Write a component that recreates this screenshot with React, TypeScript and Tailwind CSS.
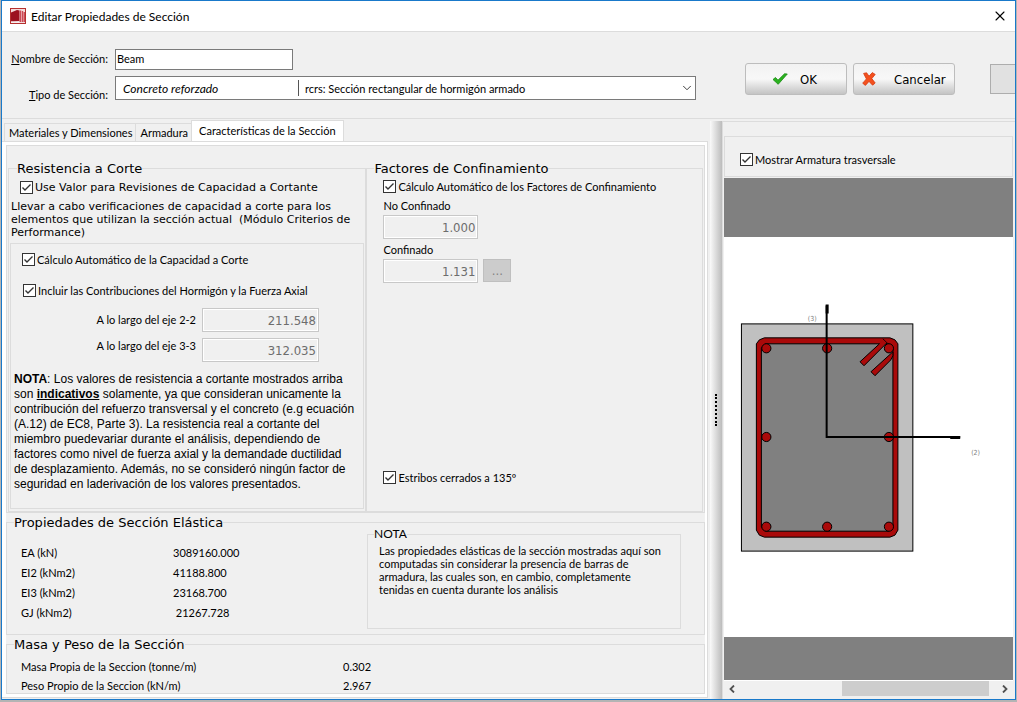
import { useState } from "react";
import type { ReactNode } from "react";
import { ChevronDown, X } from "lucide-react";

interface CheckFieldProps {
  children: ReactNode;
  className?: string;
}

function CheckField({ children, className = "" }: CheckFieldProps) {
  const [checked, setChecked] = useState(true);

  return (
    <label className={`flex items-center gap-0.5 whitespace-nowrap ${className}`}>
      <span className="grid h-[13px] w-[13px] shrink-0">
        <input
          type="checkbox"
          checked={checked}
          onChange={(e) => setChecked(e.target.checked)}
          className="col-start-1 row-start-1 h-[13px] w-[13px] appearance-none border border-[#333333] bg-white"
        />
        {checked && (
          <svg viewBox="0 0 13 13" className="pointer-events-none col-start-1 row-start-1 h-[13px] w-[13px]">
            <path d="M2.5 6.5 L5 9 L10.5 3.5" fill="none" stroke="#333" strokeWidth="1.4" />
          </svg>
        )}
      </span>
      <span>{children}</span>
    </label>
  );
}

interface GroupProps {
  title: string;
  children: ReactNode;
  className?: string;
  small?: boolean;
}

function Group({ title, children, className = "", small = false }: GroupProps) {
  return (
    <fieldset className={`min-w-0 border border-[#dcdcdc] ${className}`}>
      <legend
        className={
          small
            ? "ml-1.5 h-4 text-[12px] leading-4"
            : "ml-[7px] h-4 font-['Verdana','DejaVu_Sans',sans-serif] text-[13px] leading-[17px]"
        }
      >
        {title}
      </legend>
      {children}
    </fieldset>
  );
}

interface ValueBoxProps {
  id: string;
  value: string;
  className: string;
}

function ValueBox({ id, value, className }: ValueBoxProps) {
  return (
    <input
      id={id}
      type="text"
      disabled
      defaultValue={value}
      className={`h-6 border border-[#c8c8c8] bg-[#f0f0f0] px-0.5 text-right font-['Tahoma','DejaVu_Sans_Condensed',sans-serif] text-[13px] text-[#6d6d6d] shadow-[inset_0_0_0_1px_#ffffff] ${className}`}
    />
  );
}

const tabs = ["Materiales y Dimensiones", "Armadura", "Características de la Sección"];

const elasticProps = [
  ["EA (kN)", "3089160.000"],
  ["EI2 (kNm2)", "41188.800"],
  ["EI3 (kNm2)", "23168.700"],
  ["GJ (kNm2)", "\u00a021267.728"],
];

const massProps = [
  ["Masa Propia de la Seccion (tonne/m)", "0.302"],
  ["Peso Propio de la Seccion (kN/m)", "2.967"],
];

// Rebar centres in drawing units
const bars = [
  [42, 111], [103, 111], [165, 111],
  [42, 200], [165, 200],
  [42, 290], [103, 290], [165, 290],
];

function AppIcon() {
  return (
    <svg viewBox="0 0 16 16" className="h-4 w-4">
      <rect x="0.5" y="0.5" width="15" height="15" fill="#f3dcdc" stroke="#b5302f" />
      <path d="M1 4.5 L7 2 L9.5 2.4 V14 L1 13.5 Z" fill="#9c1220" />
      <path d="M1 13.6 L9.5 13 V15 H1 Z" fill="#f7eeee" />
      <path d="M10.5 2.4 V14 M12.5 3 V14 M14.3 4 V14" stroke="#cc4a56" strokeWidth="1.4" />
    </svg>
  );
}

function TickIcon() {
  return (
    <svg viewBox="0 0 16 12" className="h-3 w-4">
      <path d="M1 6.5 L3.5 4.5 L6 7.2 L12.5 0.8 L15.3 1 L6.2 11.3 Z" fill="#2bb21f" stroke="#168a12" strokeWidth="0.8" />
    </svg>
  );
}

function CrossIcon() {
  return (
    <svg viewBox="0 0 14 14" className="h-3.5 w-3.5">
      <path
        d="M1.6 1.4 L4.6 0.8 L7 4.2 L10.3 0.6 L13.2 2.4 L9.8 6.6 L13.2 11 L10.6 13.2 L7 9.4 L3.4 13.4 L0.7 11.2 L4.4 6.9 Z"
        fill="#f4511e"
        stroke="#d43a12"
        strokeWidth="0.8"
      />
    </svg>
  );
}

function SectionDrawing() {
  return (
    <svg viewBox="0 0 290 400" className="h-full w-full" preserveAspectRatio="xMidYMid meet">
      <rect x="17.5" y="86.5" width="172" height="228" fill="#c0c0c0" stroke="#000" />
      <path
        d="M40.5 100.5 H166.5 L171.5 102.5 L174.5 106.5 V293.5 L171.5 298.5 L166.5 300.5 H40.5 L35.5 298.5 L32.5 293.5 V106.5 L35.5 102.5 Z"
        fill="#aa0a0a"
        stroke="#000"
      />
      <path
        d="M41.5 106.5 H165.5 L169.5 110.5 V290.5 L165.5 294.5 H41.5 L37.5 290.5 V110.5 Z"
        fill="#808080"
        stroke="#000"
      />
      {bars.map(([cx, cy]) => (
        <circle key={`${cx}-${cy}`} cx={cx + 0.5} cy={cy} r="4.6" fill="#aa0a0a" stroke="#000" />
      ))}
      <path d="M159.5 101.5 L163.5 105.5 L140.5 128.5 L136.5 124.5 L156 106.5" fill="#aa0a0a" stroke="#000" />
      <path d="M169.5 114.5 L147.5 134.5 L151.5 138.5 L167.5 122.5 L169.5 118.5 Z" fill="#aa0a0a" stroke="#000" />
      <path d="M157 105.5 L160 102.5 L163 105.5" fill="#aa0a0a" stroke="none" />
      <path d="M103 68 V200 H237" fill="none" stroke="#000" strokeWidth="2" />
      <path d="M103.5 67 V76 M227 200.5 H237" stroke="#000" strokeWidth="3" />
      <text x="84" y="84" fontSize="7" fill="#808080" className="font-['DejaVu_Sans_Condensed']">(3)</text>
      <text x="248" y="218" fontSize="7" fill="#808080" className="font-['DejaVu_Sans_Condensed']">(2)</text>
    </svg>
  );
}

function Header() {
  return (
    <div className="flex h-22 items-start justify-between border-t border-[#dcdcdc] border-b pl-2">
      <div className="grid min-w-0 flex-1 grid-cols-[98px_1fr] gap-x-[7px] gap-y-1.5 pt-[17px]">
        <label htmlFor="name" className="mt-0.5 h-4 whitespace-nowrap text-right">
          <u>N</u>ombre de Sección:
        </label>
        <input id="name" type="text" defaultValue="Beam" className="h-[21px] w-[178px] border border-[#7a7a7a] bg-white px-px pb-0.5" />
        <label htmlFor="kind" className="mt-[11px] h-3 whitespace-nowrap text-right">
          <u>T</u>ipo de Sección:
        </label>
        <div className="flex h-6 items-center border border-[#7a7a7a] bg-white">
          <span className="w-[182px] shrink-0 pl-[7px] text-[12px] italic">Concreto reforzado</span>
          <div className="grid h-4 min-w-0 flex-1 items-center border-l border-[#555555]">
            <select id="kind" className="col-start-1 row-start-1 w-full appearance-none bg-transparent pl-1.5">
              <option>rcrs: Sección rectangular de hormigón armado</option>
            </select>
            <ChevronDown className="pointer-events-none col-start-1 row-start-1 mr-px h-3.5 w-3.5 justify-self-end text-[#333333]" strokeWidth={1.6} />
          </div>
        </div>
      </div>
      <div className="ml-[49px] flex shrink-0 items-center pt-[31px] font-['Tahoma','DejaVu_Sans_Condensed',sans-serif] text-[13px]">
        <button className="mr-1.5 flex h-8 w-[102px] items-center rounded-[3px] border border-[#bdbdbd] bg-linear-to-b from-[#f2f2f2] via-[#f8f8f8] to-[#c4c4c4] pl-[26px]">
          <TickIcon />
          <span className="ml-3">OK</span>
        </button>
        <button className="mr-[35px] flex h-8 w-[102px] items-center rounded-[3px] border border-[#bdbdbd] bg-linear-to-b from-[#f2f2f2] via-[#f8f8f8] to-[#c4c4c4] pl-2">
          <CrossIcon />
          <span className="ml-[18px]">Cancelar</span>
        </button>
        <button aria-label="Ayuda" className="h-[30px] w-[25px] border border-r-0 border-[#adadad] bg-[#e1e1e1]" />
      </div>
    </div>
  );
}

function ShearGroup() {
  return (
    <Group title="Resistencia a Corte" className="flex flex-col px-px pb-0.5">
      <div className="font-['Verdana','DejaVu_Sans',sans-serif]">
        <CheckField className="mt-1 ml-2.5">Use Valor para Revisiones de Capacidad a Cortante</CheckField>
        <p className="mt-[5px] ml-px whitespace-pre leading-[13px]">
          Llevar a cabo verificaciones de capacidad a corte para los
          <br />
          elementos que utilizan la sección actual{"  "}(Módulo Criterios de
          <br />
          Performance)
        </p>
      </div>
      <div className="mt-1 flex-1 border border-[#dcdcdc] pl-[3px]">
        <CheckField className="mt-2 ml-2">Cálculo Automático de la Capacidad a Corte</CheckField>
        <CheckField className="mt-4 ml-[9px]">Incluir las Contribuciones del Hormigón y la Fuerza Axial</CheckField>
        <div className="mt-2.5 grid grid-cols-[182px_117px] gap-x-1.5 gap-y-1.5">
          <label htmlFor="eje22" className="pt-1 text-right">A lo largo del eje 2-2</label>
          <ValueBox id="eje22" value="211.548" className="w-full" />
          <label htmlFor="eje33" className="text-right">A lo largo del eje 3-3</label>
          <ValueBox id="eje33" value="312.035" className="w-full" />
        </div>
        <p className="mt-2.5 whitespace-nowrap font-['Liberation_Sans',Arial,sans-serif] text-[12px] leading-[15px]">
          <b>NOTA</b>: Los valores de resistencia a cortante mostrados arriba
          <br />
          son <b className="underline">indicativos</b> solamente, ya que consideran unicamente la
          <br />
          contribución del refuerzo transversal y el concreto (e.g ecuación
          <br />
          (A.12) de EC8, Parte 3). La resistencia real a cortante del
          <br />
          miembro puedevariar durante el análisis, dependiendo de
          <br />
          factores como nivel de fuerza axial y la demandade ductilidad
          <br />
          de desplazamiento. Además, no se consideró ningún factor de
          <br />
          seguridad en laderivación de los valores presentados.
        </p>
      </div>
    </Group>
  );
}

function ConfinementGroup() {
  return (
    <Group title="Factores de Confinamiento" className="flex flex-col">
      <div className="flex h-full flex-col pl-4">
        <CheckField className="mt-[3px]">Cálculo Automático de los Factores de Confinamiento</CheckField>
        <label htmlFor="noconf" className="mt-1">No Confinado</label>
        <ValueBox id="noconf" value="1.000" className="mt-0.5 w-[95px]" />
        <label htmlFor="conf" className="mt-[3px]">Confinado</label>
        <div className="mt-0.5 flex gap-[5px]">
          <ValueBox id="conf" value="1.131" className="w-[95px]" />
          <button disabled className="h-[23px] w-7 border border-[#bfbfbf] bg-[#cccccc] font-['Tahoma','DejaVu_Sans_Condensed',sans-serif] text-[13px] text-[#838383]">
            ...
          </button>
        </div>
        <CheckField className="mt-auto mb-[26px]">Estribos cerrados a 135º</CheckField>
      </div>
    </Group>
  );
}

function ElasticGroup() {
  return (
    <Group title="Propiedades de Sección Elástica" className="mt-px h-[121px]">
      <div className="grid grid-cols-[360px_1fr]">
        <table className="mt-3 ml-3.5 h-20 table-fixed self-start">
          <tbody>
            {elasticProps.map(([name, value]) => (
              <tr key={name} className="h-5">
                <th scope="row" className="w-[152px] p-0 text-left font-normal">{name}</th>
                <td className="p-0">{value}</td>
              </tr>
            ))}
          </tbody>
        </table>
        <Group title="NOTA" small className="-mt-1 mr-[23px] h-[103px]">
          <p className="mt-0.5 ml-[11px] whitespace-nowrap leading-[13px]">
            Las propiedades elásticas de la sección mostradas aquí son
            <br />
            computadas sin considerar la presencia de barras de
            <br />
            armadura, las cuales son, en cambio, completamente
            <br />
            tenidas en cuenta durante los análisis
          </p>
        </Group>
      </div>
    </Group>
  );
}

function MassGroup() {
  return (
    <Group title="Masa y Peso de la Sección" className="mt-px h-[58px]">
      <table className="mt-[5px] ml-3.5 table-fixed">
        <tbody>
          {massProps.map(([name, value]) => (
            <tr key={name} className="h-[19px]">
              <th scope="row" className="w-[322px] p-0 text-left font-normal">{name}</th>
              <td className="p-0">{value}</td>
            </tr>
          ))}
        </tbody>
      </table>
    </Group>
  );
}

function PropertiesPane() {
  return (
    <div className="flex min-w-0 flex-col pt-px pb-px">
      <div role="tablist" className="flex items-end pl-0.5">
        {tabs.map((tab, i) => (
          <button
            key={tab}
            role="tab"
            aria-selected={i === 2}
            className={
              i === 2
                ? "-mb-px h-[22px] border border-b-0 border-[#dcdcdc] bg-white px-[7px] pb-0.5 whitespace-nowrap"
                : "h-[18px] border border-r-0 border-b-0 border-[#dcdcdc] pr-[3px] pl-1 whitespace-nowrap"
            }
          >
            {tab}
          </button>
        ))}
      </div>
      <div role="tabpanel" className="mr-0.5 flex flex-1 flex-col border border-l-0 border-[#dcdcdc] bg-white py-[3px] pr-0.5 pl-1">
        <div className="flex flex-1 flex-col bg-[#f0f0f0]">
          <div className="grid flex-1 grid-cols-[360fr_338fr] border border-[#dcdcdc] px-px pt-3.5">
            <ShearGroup />
            <ConfinementGroup />
          </div>
          <ElasticGroup />
          <MassGroup />
        </div>
      </div>
    </div>
  );
}

function PreviewPane() {
  return (
    <div className="mt-0.5 flex min-w-0 flex-col border-t border-l border-[#dcdcdc] pt-3.5 pr-0.5 pb-[3px] pl-px">
      <div className="flex h-[41px] items-center border border-[#dcdcdc] pt-1.5 pl-[15px]">
        <CheckField>Mostrar Armatura trasversale</CheckField>
      </div>
      <div className="mt-px h-[59px] bg-[#808080]" />
      <div className="min-h-0 flex-1 bg-white">
        <SectionDrawing />
      </div>
      <div className="h-[43px] bg-[#808080]" />
      <div className="flex h-4 items-center border-t border-white text-[#505050]">
        <button aria-label="Desplazar a la izquierda" className="flex w-4 justify-center">
          <svg viewBox="0 0 8 8" className="h-2 w-2">
            <path d="M6 0.5 L2.5 4 L6 7.5" fill="none" stroke="currentColor" strokeWidth="1.8" />
          </svg>
        </button>
        <div className="flex h-full flex-1 justify-end">
          <div className="h-full w-[59%] bg-[#cdcdcd]" />
        </div>
        <button aria-label="Desplazar a la derecha" className="ml-2 flex w-4 justify-center">
          <svg viewBox="0 0 8 8" className="h-2 w-2">
            <path d="M2 0.5 L5.5 4 L2 7.5" fill="none" stroke="currentColor" strokeWidth="1.8" />
          </svg>
        </button>
      </div>
    </div>
  );
}

export default function App() {
  return (
    <div className="flex min-h-screen flex-col bg-[#b4b4b4] px-px pb-0.5 font-['Tahoma','Lato',sans-serif] text-[11px] leading-[15px] text-black">
      <div className="flex flex-1 flex-col border border-[#1979ca] bg-[#f0f0f0]">
        <div className="flex h-[30px] items-center bg-white pr-[7px] pl-2">
          <AppIcon />
          <h1 className="ml-[5px] flex-1 font-['Segoe_UI','Lato',sans-serif] text-[12px]">Editar Propiedades de Sección</h1>
          <button aria-label="Cerrar">
            <X className="h-4 w-4" strokeWidth={1.6} />
          </button>
        </div>
        <Header />
        <div className="grid flex-1 grid-cols-[708fr_12px_293fr]">
          <PropertiesPane />
          <div className="mt-0.5 flex items-center justify-center bg-linear-to-r from-[#fafafa] to-[#bcbcbc]">
            <div className="h-8 border-l-2 border-dotted border-black" />
          </div>
          <PreviewPane />
        </div>
      </div>
    </div>
  );
}
